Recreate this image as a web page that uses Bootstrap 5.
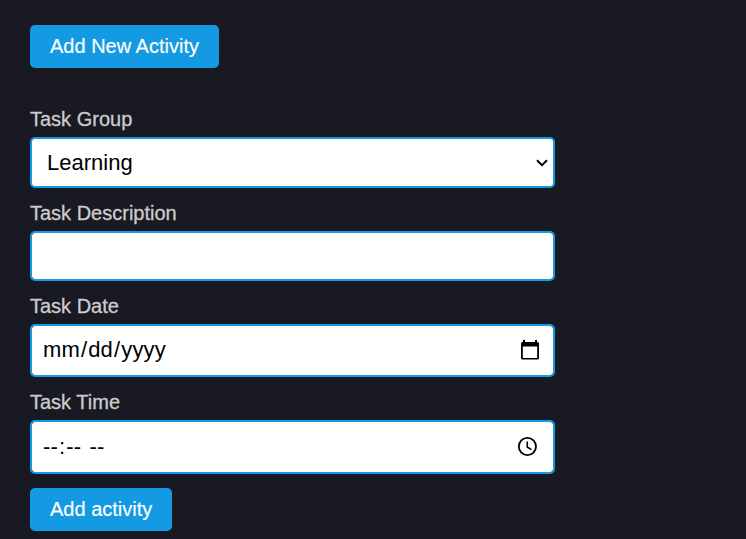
<!DOCTYPE html>
<html lang="en">
<head>
<meta charset="utf-8">
<meta name="viewport" content="width=device-width, initial-scale=1">
<title>Add New Activity</title>
<link href="https://cdn.jsdelivr.net/npm/bootstrap@5.3.0/dist/css/bootstrap.min.css" rel="stylesheet">
<style>
body { background: #191923; font-family: "Liberation Sans", Arial, sans-serif; overflow: hidden; }
.page { padding: 25px 30px 8px; }
.btn-activity, .btn-activity:hover { background: #149ae2; color: #fff; border: 0; border-radius: 5px; font-size: 20px; line-height: 23px; padding: 10px 20px; -webkit-text-stroke: .15px; }
.activity-form { width: 525px; margin-top: 39px; }
.task-label { color: #ccc; font-size: 20px; line-height: 24px; margin-bottom: 6px; display: block; -webkit-text-stroke: .3px; }
.field { border: 2px solid #149ae2; border-radius: 5px; background-color: #fff; color: #000; font-size: 22px; line-height: 25px; padding: 0 13px 0 10px; }
.field-group { height: 51px; margin-bottom: 13px; padding-left: 15px; padding-bottom: 1px;
  background: #fff url("data:image/svg+xml,%3Csvg xmlns='http://www.w3.org/2000/svg' width='12' height='8' fill='none' stroke='%23000' stroke-width='2'%3E%3Cpath d='M1 1.2 6 6.2 11 1.2'/%3E%3C/svg%3E") no-repeat right 5px top 20px / 12px 8px; }
.field-description { height: 50px; margin-bottom: 13px; }
.field-date { height: 53px; margin-bottom: 13px; padding-bottom: 1px; letter-spacing: .15px; }
.field-date > div { padding-bottom: 2px; }
.field-time { height: 54px; margin-bottom: 14px; padding-right: 16px; padding-bottom: 2px; letter-spacing: .15px; }
.part { padding: 0 1px; }
</style>
<script src="https://cdn.jsdelivr.net/npm/bootstrap@5.3.0/dist/js/bootstrap.bundle.min.js"></script>
</head>
<body>
<main class="page">
  <button type="button" class="btn btn-activity d-block">Add New Activity</button>
  <form class="activity-form">
    <label class="task-label" for="group">Task Group</label>
    <select id="group" class="form-select field field-group"><option>Learning</option></select>
    <label class="task-label" for="description">Task Description</label>
    <input id="description" type="text" class="form-control field field-description">
    <label class="task-label">Task Date</label>
    <div class="form-control field field-date d-flex align-items-center justify-content-between" tabindex="0">
      <div><span class="part">mm</span>/<span class="part">dd</span>/<span class="part">yyyy</span></div>
      <svg width="20" height="20" viewBox="0 0 20 20"><path d="M3 0h2v2h10V0h2v2h0.500Q19 2 19 3.500V18Q19 19.500 17.500 19.500H2.500Q1 19.500 1 18V3.500Q1 2 2.500 2H3ZM2.800 6.500V17.900H17.200V6.500Z" fill-rule="evenodd"/></svg>
    </div>
    <label class="task-label">Task Time</label>
    <div class="form-control field field-time d-flex align-items-center justify-content-between" tabindex="0">
      <div><span class="part">--</span>:<span class="part">--</span> <span class="part">--</span></div>
      <svg width="20" height="20" viewBox="0 0 20 20" fill="none" stroke="#000"><circle cx="10.400" cy="10.500" r="8.600" stroke-width="1.800"/><path d="M10.200 5.500V11L14.500 13.600" stroke-width="1.500"/></svg>
    </div>
    <button type="button" class="btn btn-activity d-block">Add activity</button>
  </form>
</main>
</body>
</html>
